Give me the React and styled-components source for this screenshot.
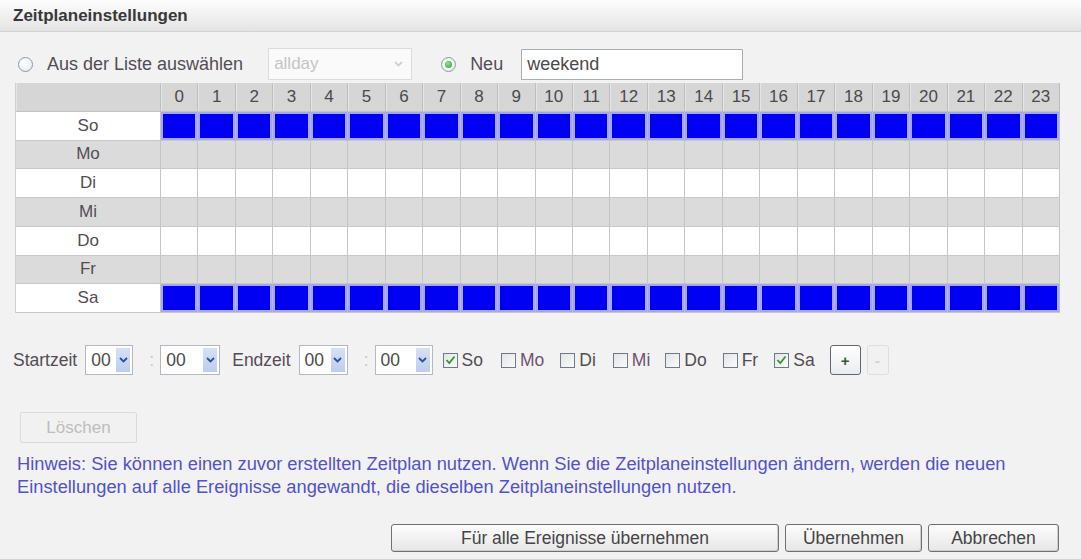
import React, { useState } from 'react';
import styled, { createGlobalStyle } from 'styled-components';

const GlobalStyle = createGlobalStyle`
  html, body { margin: 0; padding: 0; }
  body {
    background: #f2f2f2;
    font-family: "Liberation Sans", Arial, sans-serif;
    color: #4a4a4a;
  }
`;

const HOURS = Array.from({ length: 24 }, (_, i) => i);

const DAYS = [
  { key: 'So', shade: false, on: true },
  { key: 'Mo', shade: true, on: false },
  { key: 'Di', shade: false, on: false },
  { key: 'Mi', shade: true, on: false },
  { key: 'Do', shade: false, on: false },
  { key: 'Fr', shade: true, on: false },
  { key: 'Sa', shade: false, on: true },
];

const Page = styled.div`
  width: 1081px;
  height: 559px;
  overflow: hidden;
  display: flex;
  flex-direction: column;
`;

const Header = styled.div`
  height: 32px;
  box-sizing: border-box;
  display: flex;
  align-items: center;
  padding-left: 13px;
  background: linear-gradient(#fdfdfd, #e4e4e4);
  border-bottom: 1px solid #d2d2d2;
  font-size: 17px;
  font-weight: bold;
  color: #383838;
`;

const Body = styled.div`
  padding: 0 21px 0 13px;
  display: flex;
  flex-direction: column;
  font-size: 18px;
`;

const SourceRow = styled.div`
  margin-top: 16px;
  height: 32px;
  display: flex;
  align-items: center;
  padding-left: 5px;
`;

const RadioLabel = styled.label`
  display: inline-flex;
  align-items: center;
  gap: 14px;
  margin-left: ${(p) => p.$offset || 0}px;
  color: #524d55;
  cursor: pointer;
`;

const Radio = styled.span`
  width: 15px;
  height: 15px;
  box-sizing: border-box;
  border-radius: 50%;
  border: 1px solid #8b98a6;
  background: radial-gradient(circle at 40% 35%, #fff, #e6e9ec);
  display: inline-flex;
  align-items: center;
  justify-content: center;
  &::after {
    content: '';
    width: 7px;
    height: 7px;
    border-radius: 50%;
    background: ${(p) => (p.$checked ? 'radial-gradient(circle at 40% 35%, #8ee08e, #2f9e35)' : 'transparent')};
  }
`;

const DisabledSelect = styled.div`
  width: 144px;
  height: 32px;
  box-sizing: border-box;
  margin-left: 25px;
  border: 1px solid #dcdcdc;
  background: #fafafa;
  color: #c4c4c4;
  display: flex;
  align-items: center;
  justify-content: space-between;
  padding: 0 8px 0 5px;
  font-size: 17px;
`;

const TextInput = styled.input`
  width: 222px;
  height: 31px;
  box-sizing: border-box;
  margin-left: 18px;
  border: 1px solid #a7adb5;
  background: #fff;
  font: 18px "Liberation Sans", Arial, sans-serif;
  color: #4a4a4a;
  padding: 0 5px;
  outline: none;
`;

const Grid = styled.div`
  margin-top: 3px;
  margin-left: 2px;
  width: 1045px;
  display: grid;
  grid-template-columns: 145px repeat(24, 1fr);
  grid-auto-rows: 28.75px;
  border-left: 1px solid #cfcfcf;
  box-sizing: border-box;
`;

const HeadCell = styled.div`
  background: #d6d6d6;
  border-right: 1px solid #bdbdbd;
  border-bottom: 1px solid #c2c2c2;
  box-shadow: inset 1px 0 0 #e6e6e6;
  display: flex;
  align-items: center;
  justify-content: center;
  color: #4a4a4a;
  font-size: 17px;
`;

const DayCell = styled.div`
  background: ${(p) => (p.$shade ? '#dbdbdb' : '#fff')};
  border-right: 1px solid #c4c4c4;
  border-bottom: 1px solid #c8c8c8;
  display: flex;
  align-items: center;
  justify-content: center;
  color: #524d55;
  font-size: 17px;
`;

const HourCell = styled.div`
  background: ${(p) => (p.$on ? '#0000f2' : p.$shade ? '#dbdbdb' : '#fff')};
  border-right: 1px solid ${(p) => (p.$on ? '#b4b4f4' : '#c4c4c4')};
  border-bottom: 1px solid #c8c8c8;
  box-shadow: ${(p) => (p.$on ? 'inset 0 0 0 2px #a6a6f6' : 'none')};
  cursor: pointer;
`;

const TimeRow = styled.div`
  margin-top: 32px;
  height: 30px;
  display: flex;
  align-items: center;
  color: #524d55;
  font-size: 17.5px;
`;

const FieldLabel = styled.span`
  margin-left: ${(p) => p.$offset || 0}px;
  margin-right: 8px;
`;

const TimeSelect = styled.div`
  width: ${(p) => p.$w}px;
  height: 30px;
  box-sizing: border-box;
  border: 1px solid #b3b9c2;
  background: #fff;
  display: flex;
  align-items: stretch;
  justify-content: space-between;
  padding: 2px 2px 2px 5px;
  color: #4a4a4a;
`;

const SelectValue = styled.span`
  display: flex;
  align-items: center;
`;

const ArrowBox = styled.span`
  width: 14px;
  background: linear-gradient(#d6e1f5, #bccdef);
  display: flex;
  align-items: center;
  justify-content: center;
`;

const Colon = styled.span`
  width: 27px;
  padding-left: 10px;
  box-sizing: border-box;
  text-align: center;
  color: #c8c8c8;
`;

const DayCheck = styled.label`
  display: inline-flex;
  align-items: center;
  gap: 4px;
  margin-left: ${(p) => p.$offset}px;
  color: ${(p) => (p.$tint ? '#6e5470' : '#524d55')};
  cursor: pointer;
`;

const Box = styled.span`
  width: 15px;
  height: 15px;
  box-sizing: border-box;
  border: 1px solid #6f7a86;
  background: linear-gradient(135deg, #e2e4e6, #fbfbfb);
  display: inline-flex;
  align-items: center;
  justify-content: center;
`;

const SmallButton = styled.button`
  width: ${(p) => p.$w}px;
  height: 30px;
  margin-left: ${(p) => p.$offset}px;
  border-radius: 3px;
  border: 1px solid ${(p) => (p.disabled ? '#dedede' : '#5f6773')};
  background: ${(p) => (p.disabled ? '#f1f1f1' : 'linear-gradient(#ffffff, #e9ecef)')};
  color: ${(p) => (p.disabled ? '#d0d0d0' : '#2e5a2e')};
  font: bold 15px "Liberation Sans", Arial, sans-serif;
  padding: 0;
`;

const DeleteButton = styled.button`
  margin-top: 37px;
  margin-left: 7px;
  width: 117px;
  height: 31px;
  border: 1px solid #dadada;
  border-radius: 2px;
  background: #f1f1f1;
  color: #bdbdbd;
  font: 17px "Liberation Sans", Arial, sans-serif;
  align-self: flex-start;
`;

const Hint = styled.p`
  margin: 9px 0 0 4px;
  font-size: 18.3px;
  line-height: 23px;
  color: #5252cc;
`;

const ButtonBar = styled.div`
  margin-top: 26px;
  display: flex;
  justify-content: flex-end;
  gap: 6px;
  margin-right: 1px;
`;

const ActionButton = styled.button`
  width: ${(p) => p.$w}px;
  height: 28px;
  border: 1px solid #707070;
  border-radius: 3px;
  background: linear-gradient(#fdfdfd, #e6e6e6);
  box-shadow: inset -1px -1px 0 #cfcfcf;
  color: #454545;
  font: 17.5px "Liberation Sans", Arial, sans-serif;
  padding: 0;
`;

function Chevron({ color }) {
  return (
    <svg width="9" height="6" viewBox="0 0 9 6">
      <path d="M1 1 L4.5 4.5 L8 1" fill="none" stroke={color} strokeWidth="1.8" />
    </svg>
  );
}

function Check() {
  return (
    <svg width="11" height="10" viewBox="0 0 11 10">
      <path d="M1.5 5 L4.3 8 L9.5 1.5" fill="none" stroke="#2f9a2f" strokeWidth="1.8" />
    </svg>
  );
}

const CHECK_ROW = [
  { key: 'So', offset: 10, on: true },
  { key: 'Mo', offset: 18, on: false, tint: true },
  { key: 'Di', offset: 16, on: false },
  { key: 'Mi', offset: 17, on: false, tint: true },
  { key: 'Do', offset: 15, on: false },
  { key: 'Fr', offset: 16, on: false },
  { key: 'Sa', offset: 16, on: true },
];

export default function App() {
  const [name, setName] = useState('weekend');

  return (
    <Page>
      <GlobalStyle />
      <Header>Zeitplaneinstellungen</Header>
      <Body>
        <SourceRow>
          <RadioLabel>
            <Radio />
            Aus der Liste auswählen
          </RadioLabel>
          <DisabledSelect>
            allday
            <Chevron color="#d0d0d0" />
          </DisabledSelect>
          <RadioLabel $offset={29}>
            <Radio $checked />
            Neu
          </RadioLabel>
          <TextInput value={name} onChange={(e) => setName(e.target.value)} />
        </SourceRow>

        <Grid>
          <HeadCell />
          {HOURS.map((h) => (
            <HeadCell key={h}>{h}</HeadCell>
          ))}
          {DAYS.map((d) => (
            <React.Fragment key={d.key}>
              <DayCell $shade={d.shade}>{d.key}</DayCell>
              {HOURS.map((h) => (
                <HourCell key={h} $shade={d.shade} $on={d.on} />
              ))}
            </React.Fragment>
          ))}
        </Grid>

        <TimeRow>
          <FieldLabel>Startzeit</FieldLabel>
          <TimeSelect $w={48}>
            <SelectValue>00</SelectValue>
            <ArrowBox><Chevron color="#2c4f9e" /></ArrowBox>
          </TimeSelect>
          <Colon>:</Colon>
          <TimeSelect $w={60}>
            <SelectValue>00</SelectValue>
            <ArrowBox><Chevron color="#2c4f9e" /></ArrowBox>
          </TimeSelect>
          <FieldLabel $offset={12}>Endzeit</FieldLabel>
          <TimeSelect $w={49}>
            <SelectValue>00</SelectValue>
            <ArrowBox><Chevron color="#2c4f9e" /></ArrowBox>
          </TimeSelect>
          <Colon>:</Colon>
          <TimeSelect $w={58}>
            <SelectValue>00</SelectValue>
            <ArrowBox><Chevron color="#2c4f9e" /></ArrowBox>
          </TimeSelect>
          {CHECK_ROW.map((c) => (
            <DayCheck key={c.key} $offset={c.offset} $tint={c.tint}>
              <Box>{c.on && <Check />}</Box>
              {c.key}
            </DayCheck>
          ))}
          <SmallButton $w={31} $offset={15}>+</SmallButton>
          <SmallButton $w={22} $offset={6} disabled>-</SmallButton>
        </TimeRow>

        <DeleteButton disabled>Löschen</DeleteButton>

        <Hint>
          Hinweis: Sie können einen zuvor erstellten Zeitplan nutzen. Wenn Sie die Zeitplaneinstellungen ändern, werden die neuen
          <br />
          Einstellungen auf alle Ereignisse angewandt, die dieselben Zeitplaneinstellungen nutzen.
        </Hint>

        <ButtonBar>
          <ActionButton $w={388}>Für alle Ereignisse übernehmen</ActionButton>
          <ActionButton $w={137}>Übernehmen</ActionButton>
          <ActionButton $w={131}>Abbrechen</ActionButton>
        </ButtonBar>
      </Body>
    </Page>
  );
}
